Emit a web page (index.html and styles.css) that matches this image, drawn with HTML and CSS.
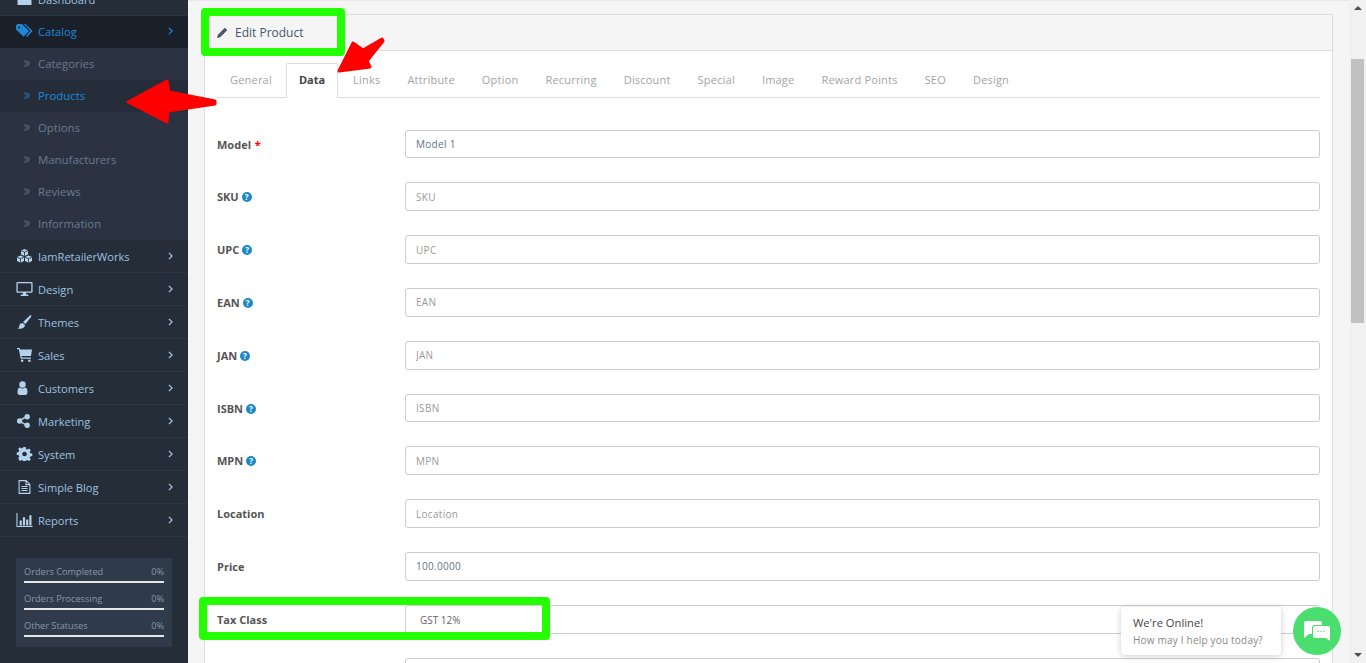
FILE: index.html
```html
<!DOCTYPE html>
<html lang="en">
<head>
<meta charset="utf-8">
<title>Edit Product</title>
<link rel="stylesheet" href="styles.css">
</head>
<body>
<div class="app">
  <aside class="sidebar">
    <ul class="menu">
      <li class="item"><svg class="ic" viewBox="0 0 16 14"><path d="M1 13V9a7 7 0 0 1 14 0v4z" fill="currentColor"/></svg><span class="item-label">Dashboard</span></li>
      <li class="item item-active">
        <svg class="ic" viewBox="0 0 17 14"><path d="M0 1.500 1.500 0H6l7 7-5.500 5.500L0 5.500z M3 2.500a1 1 0 1 0 .1 0z" fill="currentColor" fill-rule="evenodd"/><path d="M8 0h1.500l7 7-5.500 6-1-1 4.500-5z" fill="currentColor"/></svg>
        <span class="item-label">Catalog</span><svg class="chev" viewBox="0 0 6 10"><path d="M1 1l4 4-4 4" fill="none" stroke="currentColor" stroke-width="1.500"/></svg>
      </li>
      <li class="sub"><svg class="dbl" viewBox="0 0 6 7"><path d="M.5.500l2.500 3-2.500 3M3 .5l2.500 3L3 6.500" fill="none" stroke="currentColor"/></svg><span class="sub-label">Categories</span></li>
      <li class="sub sub-active"><svg class="dbl" viewBox="0 0 6 7"><path d="M.5.500l2.500 3-2.500 3M3 .5l2.500 3L3 6.500" fill="none" stroke="currentColor"/></svg><span class="sub-label">Products</span></li>
      <li class="sub"><svg class="dbl" viewBox="0 0 6 7"><path d="M.5.500l2.500 3-2.500 3M3 .5l2.500 3L3 6.500" fill="none" stroke="currentColor"/></svg><span class="sub-label">Options</span></li>
      <li class="sub"><svg class="dbl" viewBox="0 0 6 7"><path d="M.5.500l2.500 3-2.500 3M3 .5l2.500 3L3 6.500" fill="none" stroke="currentColor"/></svg><span class="sub-label">Manufacturers</span></li>
      <li class="sub"><svg class="dbl" viewBox="0 0 6 7"><path d="M.5.500l2.500 3-2.500 3M3 .5l2.500 3L3 6.500" fill="none" stroke="currentColor"/></svg><span class="sub-label">Reviews</span></li>
      <li class="sub"><svg class="dbl" viewBox="0 0 6 7"><path d="M.5.500l2.500 3-2.500 3M3 .5l2.500 3L3 6.500" fill="none" stroke="currentColor"/></svg><span class="sub-label">Information</span></li>
      <li class="item"><svg class="ic" viewBox="0 0 17 14"><g fill="currentColor"><path d="M8.500 0 12 1.400V5.400L8.500 6.900 5 5.400V1.400z"/><path d="M4.500 6.500 8 8V12l-3.500 1.800L1 12V8z"/><path d="M12.500 6.500 16 8V12l-3.500 1.800L9 12V8z"/></g><path d="M5 1.600l3.500 1.500L12 1.600M8.500 3v3.800M1 8.200l3.500 1.500L8 8.200M4.500 9.700v4M9 8.200l3.500 1.500L16 8.200M12.500 9.700v4" fill="none" stroke="#252d38" stroke-width=".8"/></svg><span class="item-label">IamRetailerWorks</span><svg class="chev" viewBox="0 0 6 10"><path d="M1 1l4 4-4 4" fill="none" stroke="currentColor" stroke-width="1.500"/></svg></li>
      <li class="item"><svg class="ic" viewBox="0 0 15 13"><path d="M1 0h13a1 1 0 0 1 1 1v8a1 1 0 0 1-1 1H9v1.500h2V13H4v-1.500h2V10H1a1 1 0 0 1-1-1V1a1 1 0 0 1 1-1zm.2 1.200v7.600h12.600V1.200z" fill="currentColor" fill-rule="evenodd"/></svg><span class="item-label">Design</span><svg class="chev" viewBox="0 0 6 10"><path d="M1 1l4 4-4 4" fill="none" stroke="currentColor" stroke-width="1.500"/></svg></li>
      <li class="item"><svg class="ic" viewBox="0 0 14 14"><path d="M13 0c1 0 1 1 .5 2L8 9 5.500 7zM5 8l2.500 2C7.500 13 4 14.500 0 13.500c2-.5 1.500-2 2-3.500.4-1.200 1.700-2 3-2z" fill="currentColor"/></svg><span class="item-label">Themes</span><svg class="chev" viewBox="0 0 6 10"><path d="M1 1l4 4-4 4" fill="none" stroke="currentColor" stroke-width="1.500"/></svg></li>
      <li class="item"><svg class="ic" viewBox="0 0 14 13"><path d="M0 0h2.500l.4 1.500H14l-1 6H4.300l.3 1.300H13V10H3.500L1.700 1.200H0z" fill="currentColor"/><circle cx="4.800" cy="11.800" r="1.200" fill="currentColor"/><circle cx="11.500" cy="11.800" r="1.200" fill="currentColor"/></svg><span class="item-label">Sales</span><svg class="chev" viewBox="0 0 6 10"><path d="M1 1l4 4-4 4" fill="none" stroke="currentColor" stroke-width="1.500"/></svg></li>
      <li class="item"><svg class="ic" viewBox="0 0 14 14"><circle cx="5" cy="3.500" r="3.200" fill="currentColor"/><path d="M0 11c0-3 .8-4.500 2.500-4.500.7.700 1.500 1 2.500 1s1.800-.3 2.500-1C9.200 6.500 10 8 10 11c0 2-.8 3-2 3H2c-1.200 0-2-1-2-3z" fill="currentColor"/></svg><span class="item-label">Customers</span><svg class="chev" viewBox="0 0 6 10"><path d="M1 1l4 4-4 4" fill="none" stroke="currentColor" stroke-width="1.500"/></svg></li>
      <li class="item"><svg class="ic" viewBox="0 0 14 13"><g fill="currentColor"><circle cx="2.500" cy="6.500" r="2.500"/><circle cx="9.500" cy="2.500" r="2.500"/><circle cx="9.500" cy="10.500" r="2.500"/><path d="M2 5.500 9 1.500l.6 1.200-7 4zM2.600 6 9.600 10l-.6 1.200-7-4z"/></g></svg><span class="item-label">Marketing</span><svg class="chev" viewBox="0 0 6 10"><path d="M1 1l4 4-4 4" fill="none" stroke="currentColor" stroke-width="1.500"/></svg></li>
      <li class="item"><svg class="ic" viewBox="0 0 14 14"><path d="M5.800 0h2.400l.4 2 1.300.6 1.700-1.100 1.700 1.700-1.100 1.700.6 1.300 2 .4v2.400l-2 .4-.6 1.300 1.100 1.700-1.700 1.700-1.700-1.100-1.300.6-.4 2H5.800l-.4-2-1.300-.6-1.700 1.100L.7 11.200l1.100-1.700-.6-1.300-2-.4V5.400l2-.4.6-1.300L.7 2l1.700-1.700 1.700 1.100 1.300-.6zM7 4.700a2.300 2.300 0 1 0 .1 0z" fill="currentColor" fill-rule="evenodd"/></svg><span class="item-label">System</span><svg class="chev" viewBox="0 0 6 10"><path d="M1 1l4 4-4 4" fill="none" stroke="currentColor" stroke-width="1.500"/></svg></li>
      <li class="item"><svg class="ic" viewBox="0 0 12 14"><path d="M.6.600h7l3.800 3.800v9H.6z M7.500.6v4h3.900M3 6.500h6M3 8.500h6M3 10.500h6" fill="none" stroke="currentColor" stroke-width="1.100"/></svg><span class="item-label">Simple Blog</span><svg class="chev" viewBox="0 0 6 10"><path d="M1 1l4 4-4 4" fill="none" stroke="currentColor" stroke-width="1.500"/></svg></li>
      <li class="item"><svg class="ic" viewBox="0 0 15 13"><path d="M.5 0v12.500H15" fill="none" stroke="currentColor"/><path d="M3 7h2v4.500H3zM6 4h2v7.500H6zM9 6h2v5.500H9zM12 2h2v9.500h-2z" fill="currentColor"/></svg><span class="item-label">Reports</span><svg class="chev" viewBox="0 0 6 10"><path d="M1 1l4 4-4 4" fill="none" stroke="currentColor" stroke-width="1.500"/></svg></li>
    </ul>
    <div class="stats">
      <div class="stat"><div class="stat-text"><span>Orders Completed</span><span>0%</span></div><div class="stat-bar"></div></div>
      <div class="stat"><div class="stat-text"><span>Orders Processing</span><span>0%</span></div><div class="stat-bar"></div></div>
      <div class="stat"><div class="stat-text"><span>Other Statuses</span><span>0%</span></div><div class="stat-bar"></div></div>
    </div>
  </aside>

  <main class="main">
    <section class="panel">
      <header class="panel-head">
        <svg class="pencil" viewBox="0 0 12 12"><path d="M0 12l.8-3.400L8 1.400a1 1 0 0 1 1.400 0l1.200 1.200a1 1 0 0 1 0 1.400L3.400 11.200z" fill="currentColor"/></svg>
        <h1 class="panel-title">Edit Product</h1>
      </header>
      <div class="panel-body">
        <ul class="tabs">
          <li class="tab">General</li>
          <li class="tab tab-active">Data</li>
          <li class="tab">Links</li>
          <li class="tab">Attribute</li>
          <li class="tab">Option</li>
          <li class="tab">Recurring</li>
          <li class="tab">Discount</li>
          <li class="tab">Special</li>
          <li class="tab">Image</li>
          <li class="tab">Reward Points</li>
          <li class="tab">SEO</li>
          <li class="tab">Design</li>
        </ul>
        <form class="form">
          <div class="row"><label class="label">Model <span class="req">*</span></label><input class="field" value="Model 1"></div>
          <div class="row"><label class="label">SKU <span class="help">?</span></label><input class="field" placeholder="SKU"></div>
          <div class="row"><label class="label">UPC <span class="help">?</span></label><input class="field" placeholder="UPC"></div>
          <div class="row"><label class="label">EAN <span class="help">?</span></label><input class="field" placeholder="EAN"></div>
          <div class="row"><label class="label">JAN <span class="help">?</span></label><input class="field" placeholder="JAN"></div>
          <div class="row"><label class="label">ISBN <span class="help">?</span></label><input class="field" placeholder="ISBN"></div>
          <div class="row"><label class="label">MPN <span class="help">?</span></label><input class="field" placeholder="MPN"></div>
          <div class="row"><label class="label">Location</label><input class="field" placeholder="Location"></div>
          <div class="row"><label class="label">Price</label><input class="field" value="100.0000"></div>
          <div class="row"><label class="label">Tax Class</label><select class="field field-select"><option>GST 12%</option></select></div>
          <div class="row"><label class="label"></label><input class="field"></div>
        </form>
      </div>
    </section>
  </main>

  <div class="scrollbar">
    <svg class="sb-arrow" viewBox="0 0 8 4"><path d="M4 0l4 4H0z" fill="currentColor"/></svg>
    <div class="sb-thumb"></div>
    <svg class="sb-arrow sb-arrow-down" viewBox="0 0 8 4"><path d="M0 0h8L4 4z" fill="currentColor"/></svg>
  </div>
</div>

<div class="mark mark-title"></div>
<div class="mark mark-tax"></div>
<svg class="arrows" viewBox="0 0 1366 663">
  <path d="M128 102 167 81 169 92 215 101 215 104 168 111 167 122z" class="arrow"/>
  <path d="M339 71 353 43 363 50 382 39 383 41 367 61 370 67z" class="arrow"/>
</svg>

<aside class="chat">
  <div class="chat-bubble">
    <p class="chat-title">We're Online!</p>
    <p class="chat-sub">How may I help you today?</p>
  </div>
  <div class="chat-btn">
    <svg viewBox="0 0 26 20" class="chat-ic"><path d="M2 0h14a2 2 0 0 1 2 2v2H11a3 3 0 0 0-3 3v6H5l-5 4V2a2 2 0 0 1 2-2z" fill="#fff"/><path d="M11 5h13a2 2 0 0 1 2 2v9l0 4-4-3H11a2 2 0 0 1-2-2V7a2 2 0 0 1 2-2z" fill="#fff"/><g fill="#4ade6e"><circle cx="14" cy="10.500" r=".7"/><circle cx="17" cy="10.500" r=".7"/><circle cx="20" cy="10.500" r=".7"/></g></svg>
  </div>
</aside>
</body>
</html>
```
FILE: styles.css
```css
* { box-sizing: border-box; }
html, body { margin: 0; height: 100%; overflow: hidden; }
body { font-family: "Open Sans", "Liberation Sans", sans-serif; font-size: 11px; color: #555; background: #f5f5f5; }
ul { list-style: none; margin: 0; padding: 0; }

.app { display: flex; height: 663px; }

/* Sidebar */
.sidebar { width: 188px; flex: none; background: #252d38; overflow: hidden; }
.menu { margin-top: -17px; }
.item { height: 33px; display: flex; align-items: center; padding: 0 15px 0 16px; font-size: 11.100px; color: #9dc3e0; border-bottom: 1px solid #2c3743; }
.ic { width: 17px; height: 14px; flex: none; margin-right: 5px; color: #b4d2ea; }
.item-label { flex: 1; }
.chev { width: 5px; height: 8px; flex: none; color: #a9c8e2; }
.item-active { height: 32px; padding-bottom: 2px; background: #1a202a; color: #1e88d8; border-bottom: 0; }
.item-active .ic, .item-active .chev { color: #1e88d8; }
.sub { height: 32px; display: flex; align-items: center; padding: 0 0 2px 24px; background: #2b3342; color: #6a7a8e; font-size: 11.400px; }
.dbl { width: 6px; height: 7px; flex: none; }
.sub-label { margin-left: 8px; }
.sub-active { background: #262d3a; color: #1e88d8; }

.stats { margin: 21px 16px 0; padding: 4px 8px 6px; height: 89px; background: #2f3b4a; border-radius: 2px; }
.stat { height: 27px; }
.stat-text { display: flex; justify-content: space-between; height: 19px; align-items: center; font-size: 9.200px; color: #8a97a6; }
.stat-bar { height: 2px; background: #e6e6e6; }

/* Main */
.main { flex: 1; min-width: 0; padding: 14px 16px 0; border-top: 1px solid #e9e9e9; background: #f5f5f5; }
.panel { border: 1px solid #ddd; border-bottom: 0; background: #fff; height: 700px; margin-top: -1px; }
.panel-head { height: 36px; display: flex; align-items: center; padding-left: 12px; background: #f5f5f5; border-bottom: 1px solid #ddd; color: #555; }
.pencil { width: 11px; height: 11px; margin-right: 7px; color: #4b5563; }
.panel-title { margin: 0; font-size: 12px; font-weight: 400; color: #4a5568; }
.panel-body { padding: 12px 12px 0; }

.tabs { display: flex; height: 35px; border-bottom: 1px solid #ddd; }
.tab { height: 35px; padding: 0 12px 3px; margin-right: 1px; border: 1px solid transparent; border-bottom: 0; display: flex; align-items: center; font-size: 11px; letter-spacing: .2px; color: #a3a3a3; }
.tab-active { margin-right: 2px; background: #fff; border-color: #ddd; border-bottom: 1px solid #fff; color: #444; font-weight: 700; letter-spacing: 0; border-radius: 2px 2px 0 0; }

.form { padding-top: 31.600px; }
.row { height: 52.800px; display: flex; align-items: flex-start; }
.label { width: 188px; flex: none; height: 29px; line-height: 29px; font-size: 11px; font-weight: 700; color: #555; }
.req { color: #f00; margin-left: 1px; }
.help { display: inline-block; width: 10px; height: 10px; line-height: 10px; text-align: center; border-radius: 50%; background: #1e88c7; color: #fff; font-size: 8px; vertical-align: 1px; }
.field { flex: 1; min-width: 0; height: 28.800px; padding: 0 10px; border: 1px solid #ccc; border-radius: 3px; background: #fff; font: 400 10px "Open Sans", sans-serif; letter-spacing: .3px; color: #66708a; outline: 0; }
.field::placeholder { color: #999; opacity: 1; }
.field-select { appearance: none; padding: 2px 0 0 14px; letter-spacing: 0; color: #666; }

/* Scrollbar */
.scrollbar { width: 17px; flex: none; background: #f1f1f1; display: flex; flex-direction: column; align-items: center; color: #505050; padding-top: 6px; }
.sb-arrow { width: 8px; height: 4px; flex: none; }
.sb-thumb { width: 13px; height: 264px; margin-top: 49px; background: #c1c1c1; }
.sb-arrow-down { margin-top: auto; margin-bottom: 6px; }

/* Annotations */
.mark { position: absolute; border: 8px solid #24ff00; border-radius: 4px; }
.mark-title { left: 201px; top: 8px; width: 144px; height: 48px; }
.mark-tax { left: 199px; top: 597px; width: 351px; height: 43px; }
.arrows { position: absolute; left: 0; top: 0; width: 1366px; height: 663px; pointer-events: none; }
.arrow { fill: #f00; stroke: #f00; stroke-width: 3; stroke-linejoin: round; }

/* Chat */
.chat { position: absolute; left: 1121px; top: 607px; display: flex; align-items: center; }
.chat-bubble { width: 160px; height: 48px; padding: 8px 12px; background: #fff; border-radius: 4px; box-shadow: 0 1px 6px rgba(0,0,0,.2); }
.chat-title { margin: 0; font-size: 11.200px; line-height: 16px; color: #444; }
.chat-sub { margin: 2px 0 0; font-size: 10px; line-height: 14px; color: #888; letter-spacing: .2px; }
.chat-btn { width: 48px; height: 48px; margin-left: 12px; border-radius: 50%; background: #4ade6e; display: flex; align-items: center; justify-content: center; }
.chat-ic { width: 26px; height: 20px; }
```
